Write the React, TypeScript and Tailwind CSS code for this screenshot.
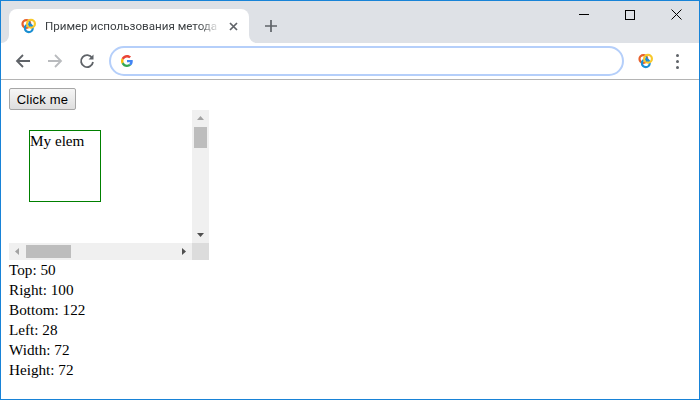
import React from "react";

function Rings({ className }: { className: string }) {
  return (
    <svg viewBox="0 0 16 16" className={className} fill="none" strokeWidth="2.2">
      <circle cx="5.4" cy="6" r="3.9" stroke="#e8612c" />
      <circle cx="7.8" cy="10.2" r="3.9" stroke="#1b8fd2" />
      <circle cx="10" cy="5.8" r="3.9" stroke="#f8c92c" />
      <path d="M8.5 3.6 L8.6 7.6 L11 7.4" stroke="#1b8fd2" strokeWidth="1.6" />
    </svg>
  );
}

function GoogleG() {
  return (
    <svg viewBox="0 0 48 48" className="w-3 h-3 shrink-0">
      <path fill="#EA4335" d="M24 9.5c3.5 0 6.7 1.2 9.2 3.6l6.9-6.9C35.9 2.4 30.5 0 24 0 14.6 0 6.5 5.4 2.6 13.2l8 6.2C12.5 13.7 17.8 9.5 24 9.5z" />
      <path fill="#4285F4" d="M47 24.5c0-1.6-.1-3.1-.4-4.5H24v9h12.9c-.6 3-2.2 5.5-4.8 7.2l7.7 6c4.5-4.2 7.2-10.3 7.2-17.7z" />
      <path fill="#FBBC05" d="M10.5 28.6c-.5-1.4-.8-3-.8-4.6s.3-3.2.8-4.6l-8-6.2C.9 16.5 0 20.1 0 24s.9 7.5 2.6 10.8l7.9-6.2z" />
      <path fill="#34A853" d="M24 48c6.5 0 11.9-2.1 15.9-5.8l-7.7-6c-2.2 1.5-4.9 2.3-8.2 2.3-6.2 0-11.5-4.2-13.4-9.9l-8 6.2C6.5 42.6 14.6 48 24 48z" />
    </svg>
  );
}

function Arrow({ color, flip }: { color: string; flip?: boolean }) {
  return (
    <svg viewBox="0 0 16 16" className={flip ? "w-4 h-4 -scale-x-100" : "w-4 h-4"} fill="none" stroke={color} strokeWidth="1.8">
      <path d="M15 8H2M8 2 2 8l6 6" />
    </svg>
  );
}

const Tri = ({ d, color }: { d: string; color: string }) => (
  <svg viewBox="0 0 9 9" className="w-[9px] h-[9px]"><path d={d} fill={color} /></svg>
);

export default function App() {
  return (
    <div className="w-[700px] h-[400px] border border-[#1883d7] bg-white flex flex-col overflow-hidden font-['Liberation_Serif',serif] text-black">
      {/* title strip */}
      <div className="h-[42px] shrink-0 bg-[#dee1e6] flex items-end pl-2">
        <div className="w-[240px] h-[34px] bg-white rounded-t-lg flex items-center pl-[12px] relative">
          <div className="absolute -left-2 bottom-0 w-2 h-2 bg-white"><div className="w-full h-full bg-[#dee1e6] rounded-br-lg" /></div>
          <div className="absolute -right-2 bottom-0 w-2 h-2 bg-white"><div className="w-full h-full bg-[#dee1e6] rounded-bl-lg" /></div>
          <Rings className="w-4 h-4 shrink-0" />
          <span className="ml-[8px] w-[175px] whitespace-nowrap text-[11.6px] leading-4 text-[#3c4043] font-['Roboto',sans-serif] [mask-image:linear-gradient(to_right,black_88%,transparent)]">
            Пример использования метода
          </span>
          <svg viewBox="0 0 9 9" className="w-[9px] h-[9px] ml-[9px]" stroke="#5f6368" strokeWidth="1.7"><path d="M1 1l7 7M8 1l-7 7" /></svg>
        </div>
        <svg viewBox="0 0 12 12" className="w-3 h-3 ml-[16px] mb-[11px]" stroke="#5f6368" strokeWidth="1.7"><path d="M6 0v12M0 6h12" /></svg>
        <div className="ml-auto flex self-start">
          <div className="w-[46px] h-[28px] flex items-center justify-center"><div className="w-[10px] h-px bg-black -mt-[1px]" /></div>
          <div className="w-[46px] h-[28px] flex items-center justify-center"><div className="w-[10px] h-[10px] border border-black -mt-[1px]" /></div>
          <div className="w-[46px] h-[28px] flex items-center justify-center">
            <svg viewBox="0 0 11 11" className="w-[11px] h-[11px] -mt-[1px]" stroke="#000" strokeWidth="1" fill="none"><path d="M.5.5l10 10M10.5.5l-10 10" /></svg>
          </div>
        </div>
      </div>
      {/* toolbar */}
      <div className="h-[37px] shrink-0 bg-white border-b border-[#b4b4b4] flex items-center pl-[14px]">
        <Arrow color="#5f6368" />
        <div className="ml-[16px]"><Arrow color="#b9bbbe" flip /></div>
        <svg viewBox="0 0 16 16" className="w-4 h-4 ml-[16px]" fill="none" stroke="#5f6368" strokeWidth="1.8">
          <path d="M13.2 5A6 6 0 1 0 14 9" />
          <path d="M14.5 1.5v5h-5z" fill="#5f6368" stroke="none" />
        </svg>
        <div className="ml-[14px] w-[515px] h-[30px] rounded-[15px] border-2 border-[#b5cffa] flex items-center pl-[10px]">
          <GoogleG />
        </div>
        <Rings className="w-4 h-4 ml-[14px]" />
        <div className="ml-[22px] flex flex-col gap-[3px]">
          <div className="w-[3px] h-[3px] rounded-full bg-[#5f6368]" />
          <div className="w-[3px] h-[3px] rounded-full bg-[#5f6368]" />
          <div className="w-[3px] h-[3px] rounded-full bg-[#5f6368]" />
        </div>
      </div>
      {/* page */}
      <div className="flex-1 pl-2 pt-2 flex flex-col items-start">
        <button className="h-[22px] w-[67px] border border-[#a6a6a6] rounded-[2px] bg-linear-to-b from-[#f6f6f6] to-[#dedede] text-[13px] leading-none text-black font-['Liberation_Sans',sans-serif] tracking-[0.2px]">
          Click me
        </button>
        <div className="w-[200px] h-[150px] flex flex-col">
          <div className="flex h-[133px]">
            <div className="w-[183px] pl-[20px] pt-[20px]">
              <div className="w-[72px] h-[72px] border border-[#008000] text-[15.2px] leading-[20px]">My elem</div>
            </div>
            <div className="w-[17px] bg-[#f0f0f0] flex flex-col items-center">
              <div className="h-[17px] flex items-center justify-center"><Tri d="M4.5 2 8 6H1z" color="#a3a3a3" /></div>
              <div className="w-[13px] h-[21px] bg-[#bdbdbd]" />
              <div className="mt-auto h-[17px] flex items-center justify-center"><Tri d="M4.5 7 8 3H1z" color="#505050" /></div>
            </div>
          </div>
          <div className="flex h-[17px]">
            <div className="w-[183px] bg-[#f0f0f0] flex items-center">
              <div className="w-[17px] flex items-center justify-center"><Tri d="M2 4.5 6 1v7z" color="#a3a3a3" /></div>
              <div className="w-[45px] h-[13px] bg-[#bdbdbd]" />
              <div className="ml-auto w-[17px] flex items-center justify-center"><Tri d="M7 4.5 3 1v7z" color="#505050" /></div>
            </div>
            <div className="w-[17px] bg-[#dcdcdc]" />
          </div>
        </div>
        <div className="text-[15.2px] leading-[20px]">
          <div>Top: 50</div>
          <div>Right: 100</div>
          <div>Bottom: 122</div>
          <div>Left: 28</div>
          <div>Width: 72</div>
          <div>Height: 72</div>
        </div>
      </div>
    </div>
  );
}
